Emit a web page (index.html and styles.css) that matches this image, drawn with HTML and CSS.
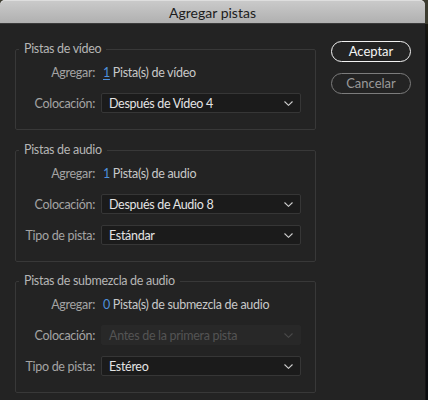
FILE: index.html
```html
<!DOCTYPE html>
<html lang="es">
<head>
<meta charset="utf-8">
<title>Agregar pistas</title>
<link rel="stylesheet" href="styles.css">
</head>
<body>
<div class="screen">
  <div class="dialog">
    <div class="titlebar">Agregar pistas</div>
    <div class="content">
      <div class="sections">
        <fieldset class="group g1">
          <legend>Pistas de vídeo</legend>
          <div class="row">
            <span class="label">Agregar:</span>
            <span class="value"><span class="num focus">1</span> Pista(s) de vídeo</span>
          </div>
          <div class="row">
            <span class="label">Colocación:</span>
            <div class="select"><span>Después de Vídeo 4</span><svg class="chev" viewBox="0 0 9 5" width="9" height="5"><path d="M0.5 0.5 L4.5 4.3 L8.5 0.5" fill="none" stroke="currentColor" stroke-width="1.1"/></svg></div>
          </div>
        </fieldset>
        <fieldset class="group g2">
          <legend>Pistas de audio</legend>
          <div class="row">
            <span class="label">Agregar:</span>
            <span class="value"><span class="num">1</span> Pista(s) de audio</span>
          </div>
          <div class="row">
            <span class="label">Colocación:</span>
            <div class="select"><span>Después de Audio 8</span><svg class="chev" viewBox="0 0 9 5" width="9" height="5"><path d="M0.5 0.5 L4.5 4.3 L8.5 0.5" fill="none" stroke="currentColor" stroke-width="1.1"/></svg></div>
          </div>
          <div class="row">
            <span class="label">Tipo de pista:</span>
            <div class="select"><span>Estándar</span><svg class="chev" viewBox="0 0 9 5" width="9" height="5"><path d="M0.5 0.5 L4.5 4.3 L8.5 0.5" fill="none" stroke="currentColor" stroke-width="1.1"/></svg></div>
          </div>
        </fieldset>
        <fieldset class="group g3">
          <legend>Pistas de submezcla de audio</legend>
          <div class="row">
            <span class="label">Agregar:</span>
            <span class="value"><span class="num">0</span> Pista(s) de submezcla de audio</span>
          </div>
          <div class="row">
            <span class="label">Colocación:</span>
            <div class="select disabled"><span>Antes de la primera pista</span><svg class="chev" viewBox="0 0 9 5" width="9" height="5"><path d="M0.5 0.5 L4.5 4.3 L8.5 0.5" fill="none" stroke="currentColor" stroke-width="1.1"/></svg></div>
          </div>
          <div class="row">
            <span class="label">Tipo de pista:</span>
            <div class="select"><span>Estéreo</span><svg class="chev" viewBox="0 0 9 5" width="9" height="5"><path d="M0.5 0.5 L4.5 4.3 L8.5 0.5" fill="none" stroke="currentColor" stroke-width="1.1"/></svg></div>
          </div>
        </fieldset>
      </div>
      <div class="buttons">
        <div class="btn primary">Aceptar</div>
        <div class="btn secondary">Cancelar</div>
      </div>
    </div>
  </div>
  <div class="outside"></div>
</div>
</body>
</html>
```
FILE: styles.css
```css
html, body {
  margin: 0;
  padding: 0;
  background: #0e0e0e;
}
body {
  font-family: Lato, "Noto Sans", sans-serif;
  font-size: 12.5px;
  letter-spacing: -0.3px;
}
.screen {
  width: 428px;
  height: 400px;
  display: flex;
  background: #3d3c30;
  overflow: hidden;
}
.dialog {
  width: 425px;
  height: 400px;
  background: #232323;
  border-radius: 5px 5px 0 0;
  display: flex;
  flex-direction: column;
  flex: none;
}
.outside {
  flex: 1;
  margin-top: 24px;
  background: linear-gradient(#1a1810 0, #0b0d10 30px, #0a0c0f 100%);
  border-left: 1px solid #151515;
}
.titlebar {
  height: 23px;
  border-bottom: 1px solid #3a3a3a;
  border-radius: 5px 5px 0 0;
  background: linear-gradient(#cbcbcb, #b0b0b0);
  box-shadow: inset 0 1px 0 #dedede;
  color: #1c1c1c;
  font-size: 14px;
  letter-spacing: 0;
  line-height: 25px;
  text-align: center;
}
.content {
  display: flex;
  padding-left: 15px;
}
.sections {
  width: 301px;
  display: flex;
  flex-direction: column;
}
.group {
  margin: 0;
  border: 1px solid #383838;
  border-radius: 2px;
  padding: 5px 14px 16px 0;
  min-width: 0;
  display: flex;
  flex-direction: column;
  gap: 11px;
}
.g1 { margin-top: 17px; }
.g2 { margin-top: 12px; }
.g3 { margin-top: 11px; }
.group legend {
  margin-left: 3px;
  padding: 0 5px;
  color: #b5b5b5;
  line-height: 16px;
}
.row {
  display: flex;
  align-items: center;
  height: 20px;
  gap: 6px;
}
.label {
  width: 79px;
  flex: none;
  text-align: right;
  color: #a4a4a4;
  white-space: nowrap;
}
.value {
  color: #c8c8c8;
  white-space: nowrap;
  margin-left: 2px;
}
.num {
  color: #4d8fdb;
}
.num.focus {
  text-decoration: underline;
  text-underline-offset: 2px;
}
.select {
  width: 200px;
  height: 20px;
  box-sizing: border-box;
  border: 1px solid #363636;
  border-radius: 2px;
  background: #1b1b1b;
  color: #e4e4e4;
  display: flex;
  align-items: center;
  justify-content: space-between;
  padding: 0 7px 0 7px;
  white-space: nowrap;
}
.select .chev {
  color: #cfcfcf;
}
.select.disabled {
  background: #282828;
  border-color: #282828;
  color: #545454;
}
.select.disabled .chev {
  color: #4a4a4a;
}
.buttons {
  margin-left: 15px;
  margin-top: 17px;
  display: flex;
  flex-direction: column;
  gap: 11px;
}
.btn {
  width: 80px;
  height: 21px;
  box-sizing: border-box;
  border-radius: 11px;
  text-align: center;
  line-height: 18px;
  font-size: 13px;
  letter-spacing: 0;
}
.btn.primary {
  border: 1.5px solid #f2f2f2;
  color: #f4f4f4;
}
.btn.secondary {
  border: 1.5px solid #7c7c7c;
  color: #9a9a9a;
}
```
